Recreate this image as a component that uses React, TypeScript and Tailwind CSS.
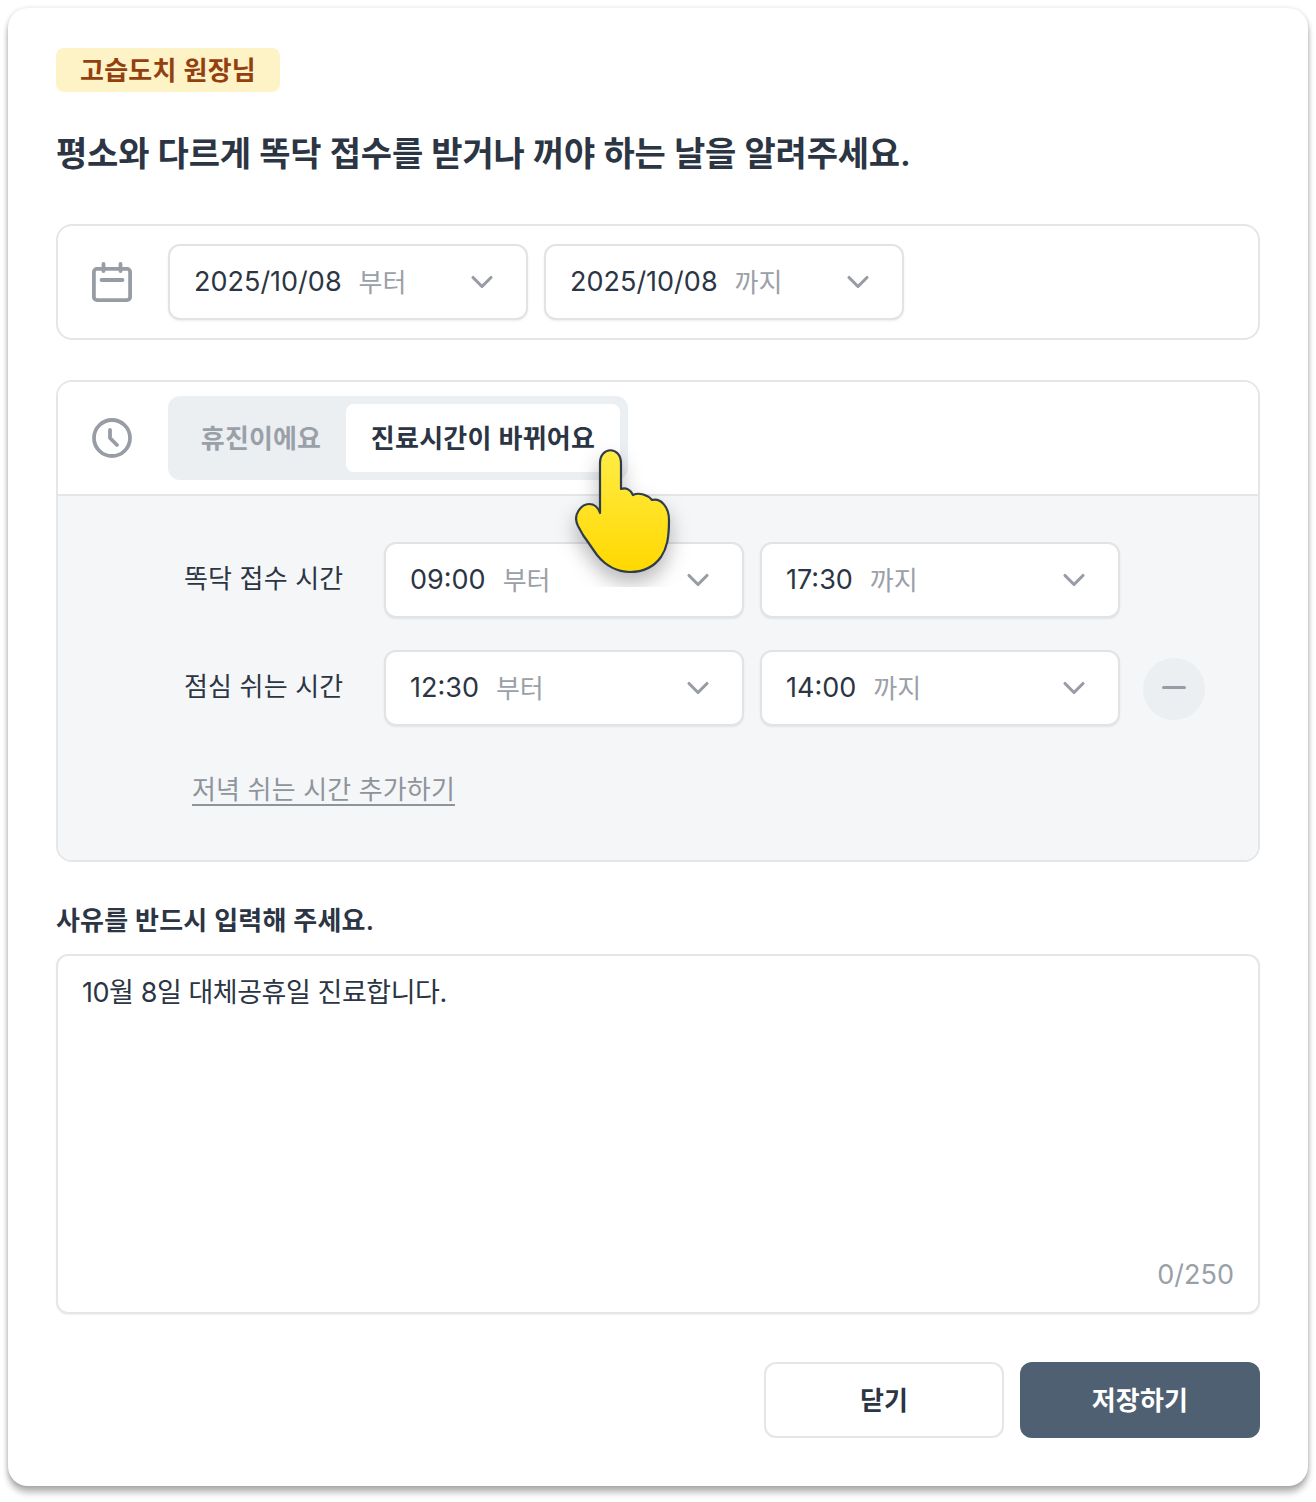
import { ChevronDown } from "lucide-react";

const font = "font-['Inter','Noto_Sans_CJK_KR',sans-serif]";

function Select({
  value,
  suffix,
  width = "w-[360px]",
}: {
  value: string;
  suffix: string;
  width?: string;
}) {
  return (
    <div
      className={`${width} flex h-[76px] shrink-0 items-center justify-between rounded-xl border-2 border-[#e2e3e5] bg-white pl-6 pr-[26px] shadow-[0_1px_2px_rgba(0,0,0,0.08)]`}
    >
      <div className="flex items-center gap-[17px]">
        <span className="text-[27px] text-[#2b3543]">{value}</span>
        <span className="text-[26px] text-[#9aa0a8]">{suffix}</span>
      </div>
      <ChevronDown size={36} strokeWidth={2.1} className="text-[#989da5]" />
    </div>
  );
}

function CalendarIcon() {
  return (
    <svg width="40" height="40" viewBox="0 0 40 40" fill="none" stroke="#989da5" strokeWidth="3.8" strokeLinecap="round">
      <rect x="1.9" y="6.9" width="36.2" height="31.2" rx="3" />
      <path d="M11.5 2V9M28.5 2V9M9.5 18H30.5" />
    </svg>
  );
}

function ClockIcon() {
  return (
    <svg width="40" height="40" viewBox="0 0 40 40" fill="none" stroke="#989da5" strokeWidth="3.8" strokeLinecap="round" strokeLinejoin="round">
      <circle cx="20" cy="20" r="18" />
      <path d="M18 12V20L25 27" />
    </svg>
  );
}

function HandPointer() {
  return (
    <div className="absolute left-[545px] top-[440px] h-[147px] w-[160px] overflow-hidden">
      <svg
        width="100"
        height="128"
        viewBox="0 0 100 128"
        className="ml-[30px] mt-[10px] overflow-visible drop-shadow-[0_10px_10px_rgba(0,0,0,0.28)]"
      >
        <defs>
          <linearGradient id="hand" x1="0" y1="0" x2="0" y2="1">
            <stop offset="0" stopColor="#ffec45" />
            <stop offset="1" stopColor="#ffd800" />
          </linearGradient>
        </defs>
        <path
          d="M25 63 V13 C25 -4 46 -4 46 13 V39 C51 37 56 40 58 45 C64 42 73 45 77 50 C86 48 94 57 94 70 C94 88 92 98 86 107 C78 118 67 122 55 122 C42 122 30 115 22 105 C17 98 13 92 8 85 L3 76 C-3 64 7 54 14 54 C19 54 23 57 25 63 Z"
          fill="url(#hand)"
          stroke="#2f3c4c"
          strokeWidth="2.2"
          strokeLinejoin="round"
        />
      </svg>
    </div>
  );
}

export default function App() {
  return (
    <div className={`${font} relative h-[1502px] w-[1316px] bg-white pl-2 pr-2 pt-2`}>
      <div className="h-[1478px] w-[1300px] rounded-[20px] bg-white px-12 pt-10 shadow-[0_7px_6px_rgba(0,0,0,0.25),0_1px_5px_rgba(0,0,0,0.2)]">
        <div className="flex h-11 w-[224px] items-center justify-center rounded-lg bg-[#fef2c7] text-[26px] font-semibold tracking-[0.25px] text-[#92400e]">
          고습도치 원장님
        </div>
        <h1 className="mt-[39px] h-[46px] text-[34px] font-semibold leading-[46px] tracking-[-0.2px] text-[#2b3543]">
          평소와 다르게 똑닥 접수를 받거나 꺼야 하는 날을 알려주세요.
        </h1>

        <section className="mt-[47px] flex h-[116px] items-center rounded-2xl border-2 border-[#e5e6e8] pl-[34px]">
          <CalendarIcon />
          <div className="ml-[36px] flex gap-4">
            <Select value="2025/10/08" suffix="부터" />
            <Select value="2025/10/08" suffix="까지" />
          </div>
        </section>

        <section className="mt-10 h-[482px] overflow-hidden rounded-2xl border-2 border-[#e5e6e8]">
          <div className="flex h-[114px] items-start border-b-2 border-[#e5e6e8] bg-white pl-[34px]">
            <div className="mt-[36px]">
              <ClockIcon />
            </div>
            <div className="ml-[36px] mt-[14px] flex h-[84px] w-[460px] items-center rounded-xl bg-[#eceff2] p-2">
              <div className="w-[170px] text-center text-[26px] font-semibold tracking-[0.15px] text-[#9aa0a8]">
                휴진이에요
              </div>
              <div className="flex h-[68px] w-[274px] items-center justify-center rounded-lg bg-white text-[26px] font-semibold tracking-[0.25px] text-[#2b3543]">
                진료시간이 바뀌어요
              </div>
            </div>
          </div>
          <div className="h-[364px] bg-[#f5f6f8] pt-[46px]">
            <div className="flex items-center pl-[126px]">
              <span className="mb-1 w-[200px] text-[26px] tracking-[0.15px] text-[#2b3543]">똑닥 접수 시간</span>
              <div className="flex gap-4">
                <Select value="09:00" suffix="부터" />
                <Select value="17:30" suffix="까지" />
              </div>
            </div>
            <div className="mt-8 flex items-center pl-[126px]">
              <span className="mb-1 w-[200px] text-[26px] tracking-[0.15px] text-[#2b3543]">점심 쉬는 시간</span>
              <div className="flex gap-4">
                <Select value="12:30" suffix="부터" />
                <Select value="14:00" suffix="까지" />
              </div>
              <div className="ml-[23px] mt-px flex h-[62px] w-[62px] items-center justify-center rounded-full bg-[#eceff2]">
                <div className="mb-0.5 h-[3px] w-6 rounded-full bg-[#989da5]" />
              </div>
            </div>
            <div className="ml-[134px] mt-[44px] w-fit text-[26px] tracking-[0.14px] text-[#8e949c] underline underline-offset-[5px]">
              저녁 쉬는 시간 추가하기
            </div>
          </div>
        </section>

        <h2 className="mt-[41px] h-9 text-[26px] font-semibold leading-9 tracking-[0.2px] text-[#2b3543]">
          사유를 반드시 입력해 주세요.
        </h2>
        <div className="mt-[15px] flex h-[360px] flex-col justify-between rounded-xl border-2 border-[#e5e6e8] bg-white px-6 pb-[17px] pt-[17px] shadow-[0_1px_2px_rgba(0,0,0,0.06)]">
          <p className="text-[27px] tracking-[-0.45px] text-[#2b3543]">10월 8일 대체공휴일 진료합니다.</p>
          <p className="text-right text-[27px] text-[#9aa0a8]">0/250</p>
        </div>

        <div className="mt-12 flex justify-end gap-4">
          <button className="h-[76px] w-[240px] rounded-xl border-2 border-[#e5e6e8] bg-white text-[26px] font-semibold tracking-[0.2px] text-[#2b3543]">
            닫기
          </button>
          <button className="h-[76px] w-[240px] rounded-xl bg-[#506073] text-[26px] font-semibold tracking-[0.2px] text-white">
            저장하기
          </button>
        </div>
      </div>
      <HandPointer />
    </div>
  );
}
